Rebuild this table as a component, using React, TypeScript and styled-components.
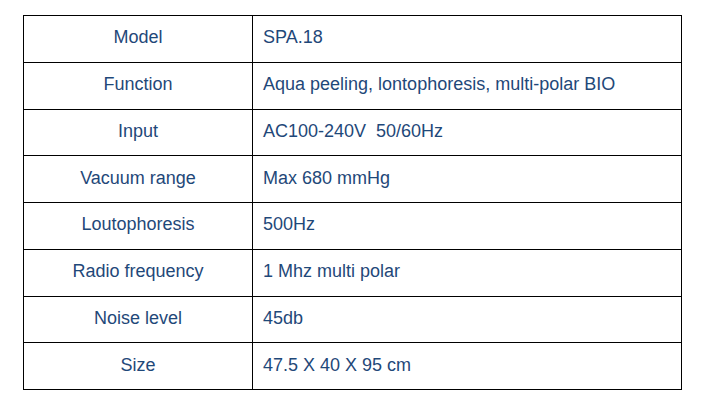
import React from "react";
import styled, { createGlobalStyle } from "styled-components";

const rows: [string, string][] = [
  ["Model", "SPA.18"],
  ["Function", "Aqua peeling, lontophoresis, multi-polar BIO"],
  ["Input", "AC100-240V\u00a0 50/60Hz"],
  ["Vacuum range", "Max 680 mmHg"],
  ["Loutophoresis", "500Hz"],
  ["Radio frequency", "1 Mhz multi polar"],
  ["Noise level", "45db"],
  ["Size", "47.5 X 40 X 95 cm"],
];

const GlobalStyle = createGlobalStyle`
  body {
    margin: 0;
    background: #ffffff;
    font-family: "Liberation Sans", Arial, sans-serif;
  }
`;

const Page = styled.div`
  padding: 15px 0 0 23px;
`;

const SpecTable = styled.table`
  width: 659px;
  border-collapse: collapse;
  color: #1f4879;
  font-size: 18px;
`;

const Row = styled.tr`
  height: 46.75px;
`;

const Cell = styled.td<{ $label?: boolean }>`
  border: 1px solid #000000;
  padding: 0 10px 3px;
  vertical-align: middle;
  text-align: ${(p) => (p.$label ? "center" : "left")};
  width: ${(p) => (p.$label ? "208px" : "auto")};
  line-height: 22px;
`;

export default function App() {
  return (
    <>
      <GlobalStyle />
      <Page>
        <SpecTable>
          <tbody>
            {rows.map(([label, value]) => (
              <Row key={label}>
                <Cell $label>{label}</Cell>
                <Cell>{value}</Cell>
              </Row>
            ))}
          </tbody>
        </SpecTable>
      </Page>
    </>
  );
}
